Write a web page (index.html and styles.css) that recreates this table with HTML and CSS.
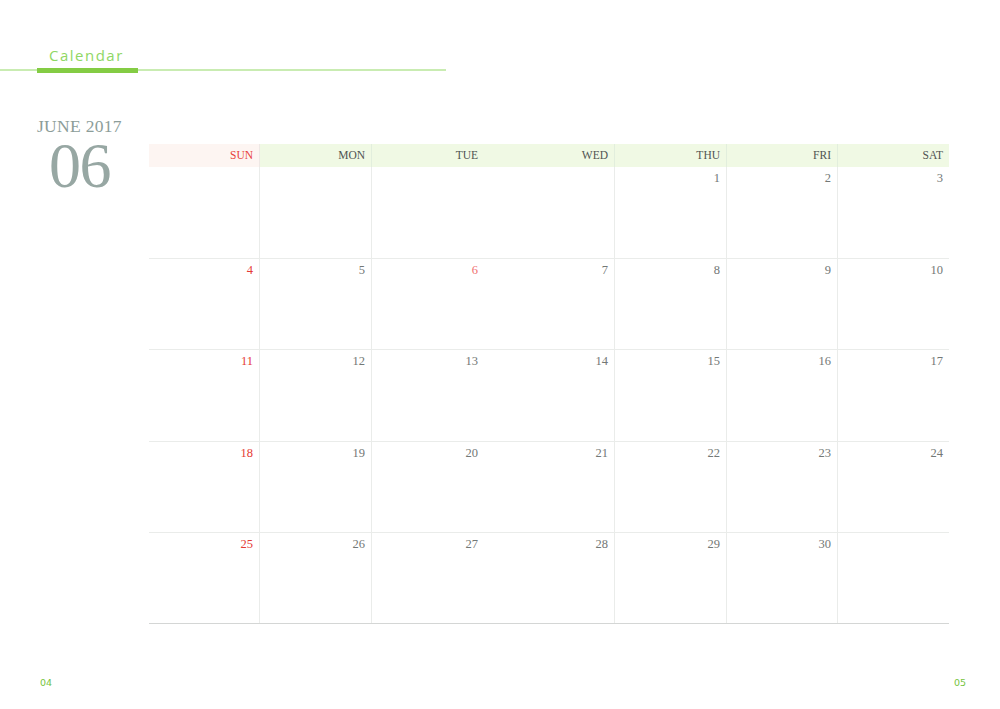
FILE: index.html
```html
<!DOCTYPE html>
<html>
<head>
<meta charset="utf-8">
<link rel="stylesheet" href="styles.css">
</head>
<body>
<div class="page">
  <header class="top">
    <div class="title">Calendar</div>
    <div class="rule"><span class="rule-bar"></span></div>
  </header>
  <main class="main">
    <aside class="side">
      <div class="month">JUNE 2017</div>
      <div class="num">06</div>
    </aside>
    <section class="cal">
      <div class="hd sun">SUN</div>
      <div class="hd">MON</div>
      <div class="hd">TUE</div>
      <div class="hd nol">WED</div>
      <div class="hd">THU</div>
      <div class="hd">FRI</div>
      <div class="hd last">SAT</div>

      <div class="c first"></div><div class="c"></div><div class="c"></div><div class="c nol"></div><div class="c">1</div><div class="c">2</div><div class="c last">3</div>

      <div class="c row red">4</div><div class="c row">5</div><div class="c row hol">6</div><div class="c row nol">7</div><div class="c row">8</div><div class="c row">9</div><div class="c row last">10</div>

      <div class="c row red">11</div><div class="c row">12</div><div class="c row">13</div><div class="c row nol">14</div><div class="c row">15</div><div class="c row">16</div><div class="c row last">17</div>

      <div class="c row red">18</div><div class="c row">19</div><div class="c row">20</div><div class="c row nol">21</div><div class="c row">22</div><div class="c row">23</div><div class="c row last">24</div>

      <div class="c row red">25</div><div class="c row">26</div><div class="c row">27</div><div class="c row nol">28</div><div class="c row">29</div><div class="c row">30</div><div class="c row last"></div>
    </section>
  </main>
  <footer class="foot">
    <span>04</span>
    <span>05</span>
  </footer>
</div>
</body>
</html>
```

FILE: styles.css
```css
html, body {
  margin: 0;
  padding: 0;
  background: #ffffff;
}
.page {
  width: 1000px;
  height: 709px;
  position: relative;
  display: flex;
  flex-direction: column;
}
.top {
  padding-top: 45px;
}
.title {
  font-family: "Open Sans", "Liberation Sans", sans-serif;
  font-size: 15px;
  line-height: 20px;
  letter-spacing: 1.5px;
  color: #8fd764;
  padding-left: 49px;
  height: 20px;
}
.rule {
  width: 446px;
  height: 2px;
  background: #c9ecb2;
  margin-top: 4px;
  display: flex;
  align-items: center;
}
.rule-bar {
  display: block;
  margin-left: 37px;
  width: 101px;
  height: 5px;
  background: #84cc44;
}
.main {
  display: flex;
  margin-top: 45px;
}
.side {
  width: 149px;
  padding-left: 37px;
  box-sizing: border-box;
  font-family: "Liberation Serif", "DejaVu Serif", serif;
  color: #8c9d99;
}
.month {
  font-size: 17.5px;
  line-height: 20px;
  letter-spacing: 0.3px;
}
.num {
  font-size: 64px;
  line-height: 60px;
  padding-left: 12px;
  letter-spacing: -1.5px;
  color: #97a7a3;
}
.cal {
  margin-top: 28px;
  width: 800px;
  display: grid;
  grid-template-columns: 111px 112px 112px 131px 112px 111px 111px;
  grid-template-rows: 23px repeat(5, 91.2px);
  border-bottom: 1px solid #d4d6d5;
  font-family: "Liberation Serif", "DejaVu Serif", serif;
}
.hd {
  background: #f0f9e4;
  color: #4f5452;
  font-size: 11.5px;
  line-height: 22px;
  text-align: right;
  padding-right: 6px;
  border-right: 1px solid #e2eedd;
  box-sizing: border-box;
}
.hd.sun {
  background: #fdf5f2;
  color: #e8413a;
  border-right-color: #eee8e5;
}
.c {
  text-align: right;
  padding: 3px 6px 0 0;
  font-size: 12.5px;
  line-height: 16px;
  color: #737876;
  border-right: 1px solid #eaecea;
  box-sizing: border-box;
}
.row {
  border-top: 1px solid #eaecea;
}
.hd.nol, .c.nol {
  border-left: none;
}
.hd:nth-child(3), .c:nth-child(7n+3) {
  border-right: none;
}
.hd.last, .c.last {
  border-right: none;
}
.red {
  color: #e53a35;
}
.hol {
  color: #f07070;
}
.foot {
  position: absolute;
  left: 0;
  right: 0;
  top: 677px;
  display: flex;
  justify-content: space-between;
  padding: 0 34px 0 40px;
  font-family: "DejaVu Sans", "Liberation Sans", sans-serif;
  font-size: 9.5px;
  color: #76c43e;
}
```
